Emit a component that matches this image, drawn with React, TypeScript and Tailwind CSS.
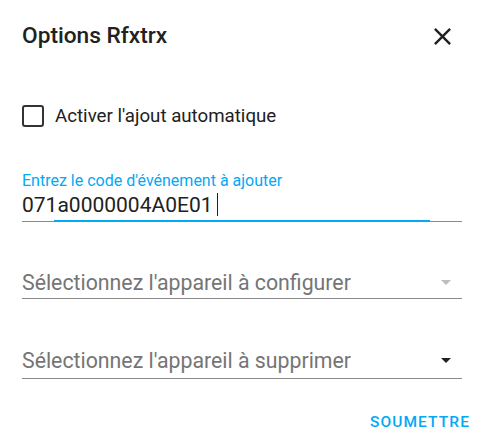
const font = { fontFamily: 'Roboto, "Noto Sans", sans-serif' };

function Arrow({ muted }: { muted?: boolean }) {
  return (
    <svg width="10" height="5" viewBox="0 0 10 5" className="shrink-0">
      <path d="M0 0h10L5 5z" fill={muted ? '#bdbdbd' : '#212121'} />
    </svg>
  );
}

function SelectField({ label, muted, tall }: { label: string; muted?: boolean; tall?: boolean }) {
  return (
    <div className={`flex items-start border-b border-[#8a8a8a] ${tall ? 'h-[32px]' : 'h-[30px]'}`}>
      <span className="flex-1 text-[21.3px] leading-[28px] text-[#757575]">{label}</span>
      <div className="mr-[11px] mt-[11px]">
        <Arrow muted={muted} />
      </div>
    </div>
  );
}

export default function App() {
  return (
    <div className="h-[444px] w-[479px] bg-white pl-[22px] pr-[17px]" style={font}>
      <div className="flex items-center justify-between pt-[20px]">
        <h2 className="text-[22.7px] font-medium leading-[32px] text-[#212121]">Options Rfxtrx</h2>
        <button className="mr-[5px] flex h-[32px] w-[30px] items-center justify-center">
          <svg width="29" height="29" viewBox="0 0 24 24">
            <path
              d="M19 6.41 17.59 5 12 10.59 6.41 5 5 6.41 10.59 12 5 17.59 6.41 19 12 13.41 17.59 19 19 17.59 13.41 12z"
              fill="#212121"
            />
          </svg>
        </button>
      </div>

      <label className="mt-[52px] flex h-[24px] items-center gap-[11px]">
        <span className="h-[22px] w-[22px] rounded-[3px] border-2 border-[#333]" />
        <span className="text-[18.7px] leading-[24px] text-[#212121]">Activer l'ajout automatique</span>
      </label>

      <div className="mt-[43px]">
        <div className="text-[16px] leading-[20px] text-[#03a9f4]">Entrez le code d'événement à ajouter</div>
        <div className="flex h-[30px] items-start">
          <span className="text-[21px] leading-[28px] text-[#212121]">071a0000004A0E01</span>
          <span className="ml-[4px] mt-[2px] h-[23px] w-px bg-[#212121]" />
        </div>
        <div className="relative h-px bg-[#8a8a8a]">
          <div className="absolute left-[32px] right-[32px] top-[-1px] h-[2px] bg-[#03a9f4]" />
        </div>
      </div>

      <div className="mt-[47px]">
        <SelectField label="Sélectionnez l'appareil à configurer" muted />
      </div>
      <div className="mt-[48px]">
        <SelectField label="Sélectionnez l'appareil à supprimer" tall />
      </div>

      <div className="mt-[33px] flex justify-end">
        <button className="mr-[-8px] text-[15.5px] font-medium uppercase leading-[20px] tracking-[1.1px] text-[#03a9f4]">
          Soumettre
        </button>
      </div>
    </div>
  );
}
